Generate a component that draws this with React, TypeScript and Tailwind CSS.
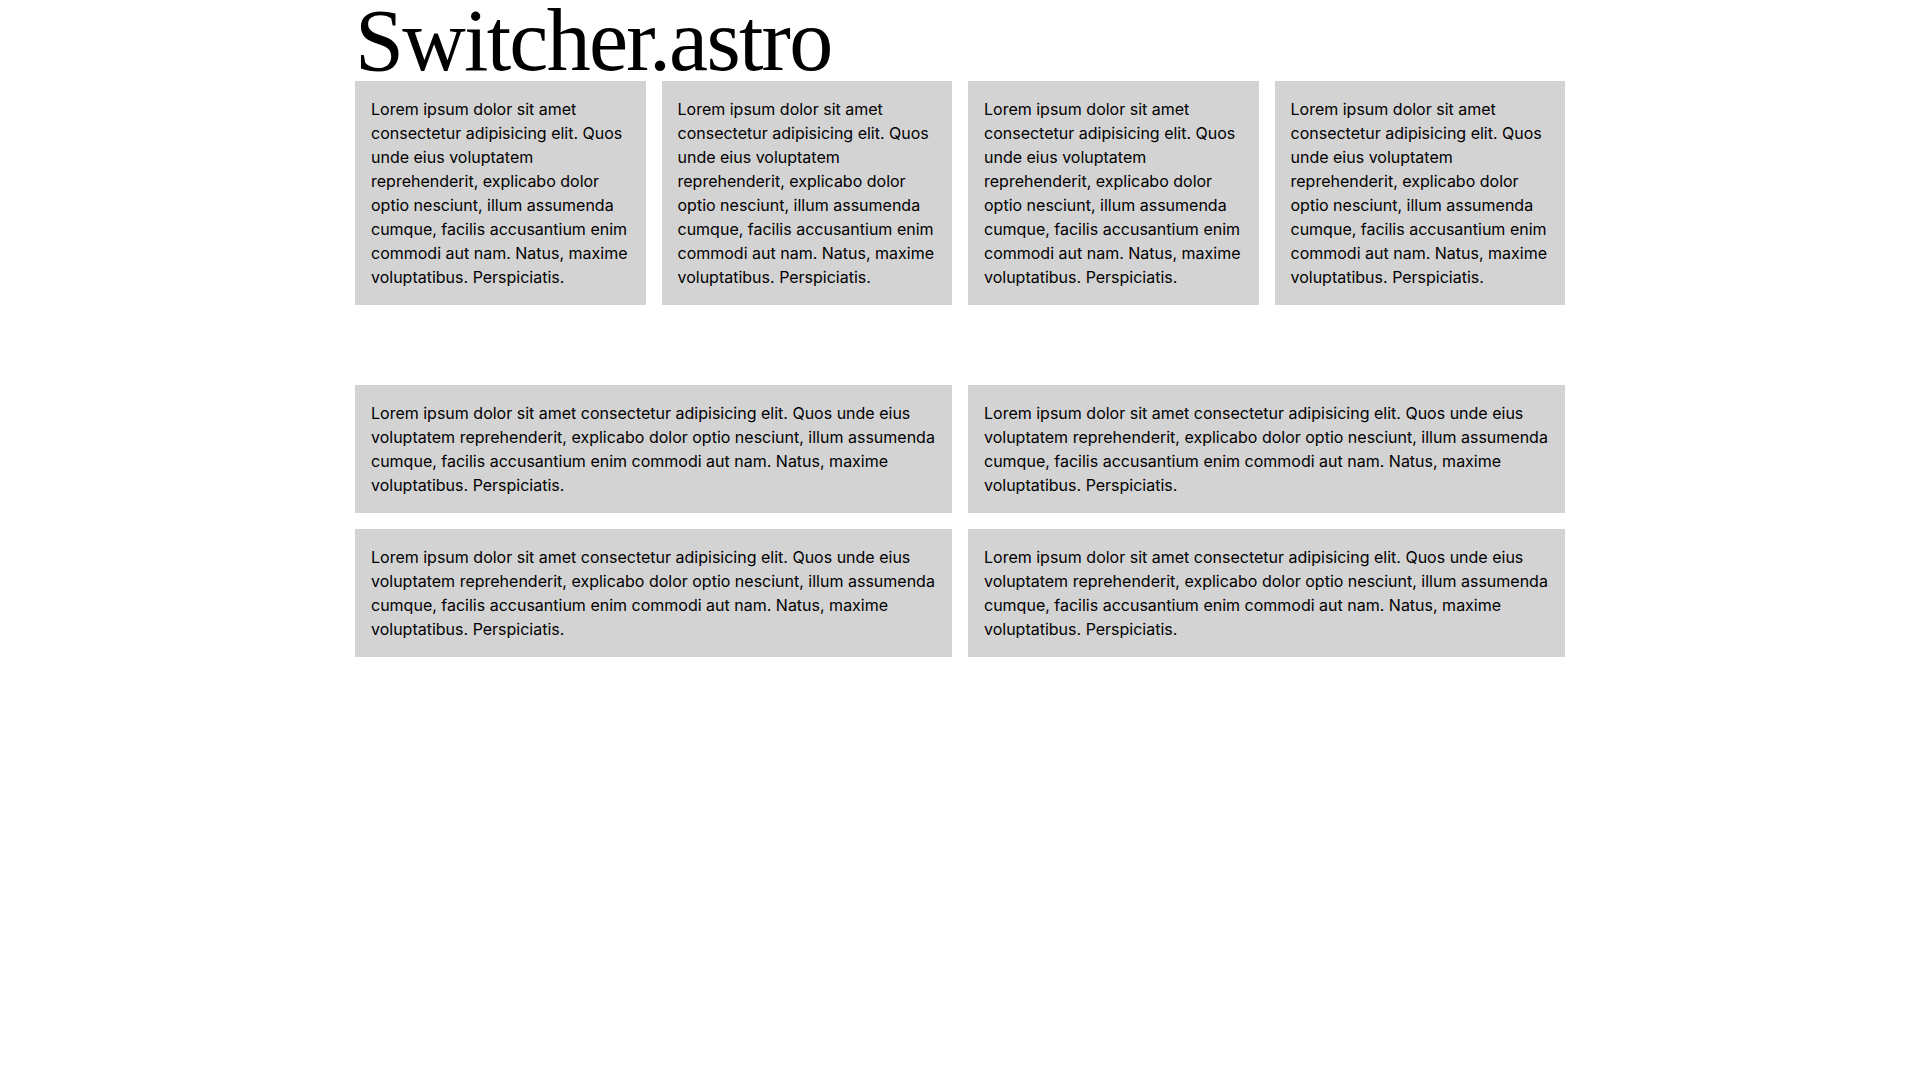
const lorem =
  "Lorem ipsum dolor sit amet consectetur adipisicing elit. Quos unde eius voluptatem reprehenderit, explicabo dolor optio nesciunt, illum assumenda cumque, facilis accusantium enim commodi aut nam. Natus, maxime voluptatibus. Perspiciatis.";

function Box() {
  return (
    <div className="bg-[#d3d3d3] p-4">
      <p className="text-base leading-6 text-black">{lorem}</p>
    </div>
  );
}

export default function App() {
  return (
    <main className="min-h-screen bg-white font-['Inter',sans-serif]">
      <div className="w-[1210px] mx-auto">
        <h1 className="font-['Liberation_Serif',serif] text-[88px] leading-[81px] tracking-[-0.02em] font-normal text-black">
          Switcher.astro
        </h1>

        {/* four across */}
        <div className="grid grid-cols-4 gap-4">
          <Box />
          <Box />
          <Box />
          <Box />
        </div>

        {/* two by two */}
        <div className="mt-20 grid grid-cols-2 gap-4">
          <Box />
          <Box />
          <Box />
          <Box />
        </div>
      </div>
    </main>
  );
}
